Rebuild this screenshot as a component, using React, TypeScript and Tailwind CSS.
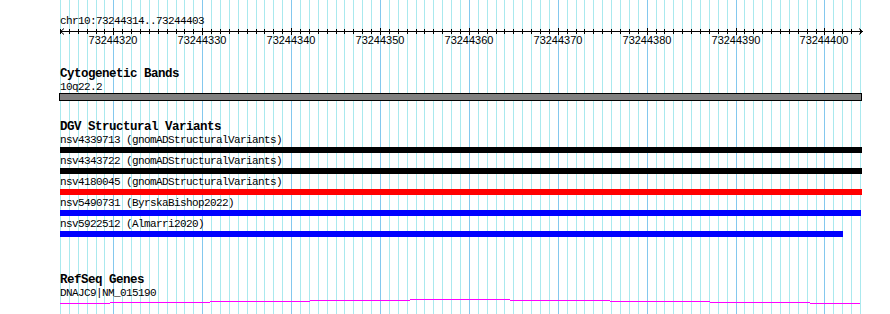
import React from "react";

const START = 73244314;
const SPAN = 90;
const LEFT = 60;
const WIDTH = 800;
const px = (i: number) => LEFT + (i * WIDTH) / SPAN;

const variants = [
  { label: "nsv4339713 (gnomADStructuralVariants)", color: "bg-black", width: "w-[802px]" },
  { label: "nsv4343722 (gnomADStructuralVariants)", color: "bg-black", width: "w-[802px]" },
  { label: "nsv4180045 (gnomADStructuralVariants)", color: "bg-[#ff0000]", width: "w-[802px]" },
  { label: "nsv5490731 (ByrskaBishop2022)", color: "bg-[#0000ff]", width: "w-[801px]" },
  { label: "nsv5922512 (Almarri2020)", color: "bg-[#0000ff]", width: "w-[783px]" },
];

const GridLines: React.FC = () => (
  <svg className="absolute inset-0 z-0" width={890} height={314}>
    {Array.from({ length: SPAN + 1 }, (_, i) => {
      const x = Math.round(px(i)) + 0.5;
      const major = (START + i) % 10 === 0;
      return (
        <line
          key={i}
          x1={x}
          x2={x}
          y1={0}
          y2={314}
          stroke={major ? "#84c8ee" : "#aae9ee"}
          strokeWidth={1}
        />
      );
    })}
  </svg>
);

const Ruler: React.FC = () => (
  <svg width={830} height={20} className="block">
    <line x1={0} x2={803} y1={4.5} y2={4.5} stroke="#000" />
    <polyline points="4,1.5 0.5,4.5 4,7.5" fill="none" stroke="#000" />
    <polyline points="799,1.5 802.5,4.5 799,7.5" fill="none" stroke="#000" />
    {Array.from({ length: SPAN + 1 }, (_, i) => {
      const x = Math.round(px(i)) - LEFT + 0.5;
      const major = (START + i) % 10 === 0;
      return (
        <line
          key={i}
          x1={x}
          x2={x}
          y1={major ? 1 : 2}
          y2={major ? 8 : 7}
          stroke="#000"
        />
      );
    })}
    {Array.from({ length: SPAN + 1 }, (_, i) => i)
      .filter((i) => (START + i) % 10 === 0 && START + i <= 73244400)
      .map((i) => (
        <text
          key={i}
          x={Math.round(px(i)) - LEFT}
          y={17}
          textAnchor="middle"
          fontFamily="'Liberation Sans', Arial, sans-serif"
          fontSize={11}
          fill="#000"
        >
          {START + i}
        </text>
      ))}
  </svg>
);

const Title: React.FC<{ children: React.ReactNode; className?: string }> = ({ children, className }) => (
  <div className={`font-['Liberation_Mono',monospace] font-bold text-[12.5px] tracking-[-0.5px] leading-[13px] text-black ${className ?? ""}`}>
    {children}
  </div>
);

const Label: React.FC<{ children: React.ReactNode }> = ({ children }) => (
  <div className="font-['Liberation_Mono',monospace] text-[11px] tracking-[-0.6px] leading-[12px] text-black whitespace-pre">
    {children}
  </div>
);

const App: React.FC = () => {
  const genePath = [
    [60, 110, 303],
    [110, 210, 302],
    [210, 310, 301],
    [310, 410, 300],
    [410, 510, 299],
    [510, 610, 300],
    [610, 710, 301],
    [710, 810, 302],
    [810, 860, 303],
  ];

  return (
    <div className="relative w-[890px] h-[314px] bg-white overflow-hidden">
      <GridLines />
      <div className="relative z-10 flex flex-col pl-[60px] pt-[15px]">
        <Label>chr10:73244314..73244403</Label>
        <Ruler />

        <Title className="mt-[21px]">Cytogenetic Bands</Title>
        <Label>10q22.2</Label>
        <div className="-ml-[1px] w-[803px] h-[8px] border border-black bg-[#808080]" />

        <Title className="mt-[20px]">DGV Structural Variants</Title>
        <div className="flex flex-col gap-[2px]">
          {variants.map((v) => (
            <div key={v.label} className="flex flex-col gap-[1px]">
              <Label>{v.label}</Label>
              <div className={`h-[6px] ${v.width} ${v.color}`} />
            </div>
          ))}
        </div>

        <Title className="mt-[37px]">RefSeq Genes</Title>
        <Label>DNAJC9|NM_015190</Label>
        <svg width={800} height={7} className="block">
          {genePath.map(([a, b, y], i) => (
            <line key={i} x1={a - 60} x2={b - 60} y1={y - 299 + 0.5} y2={y - 299 + 0.5} stroke="#ff00ff" />
          ))}
        </svg>
      </div>
    </div>
  );
};

export default App;
